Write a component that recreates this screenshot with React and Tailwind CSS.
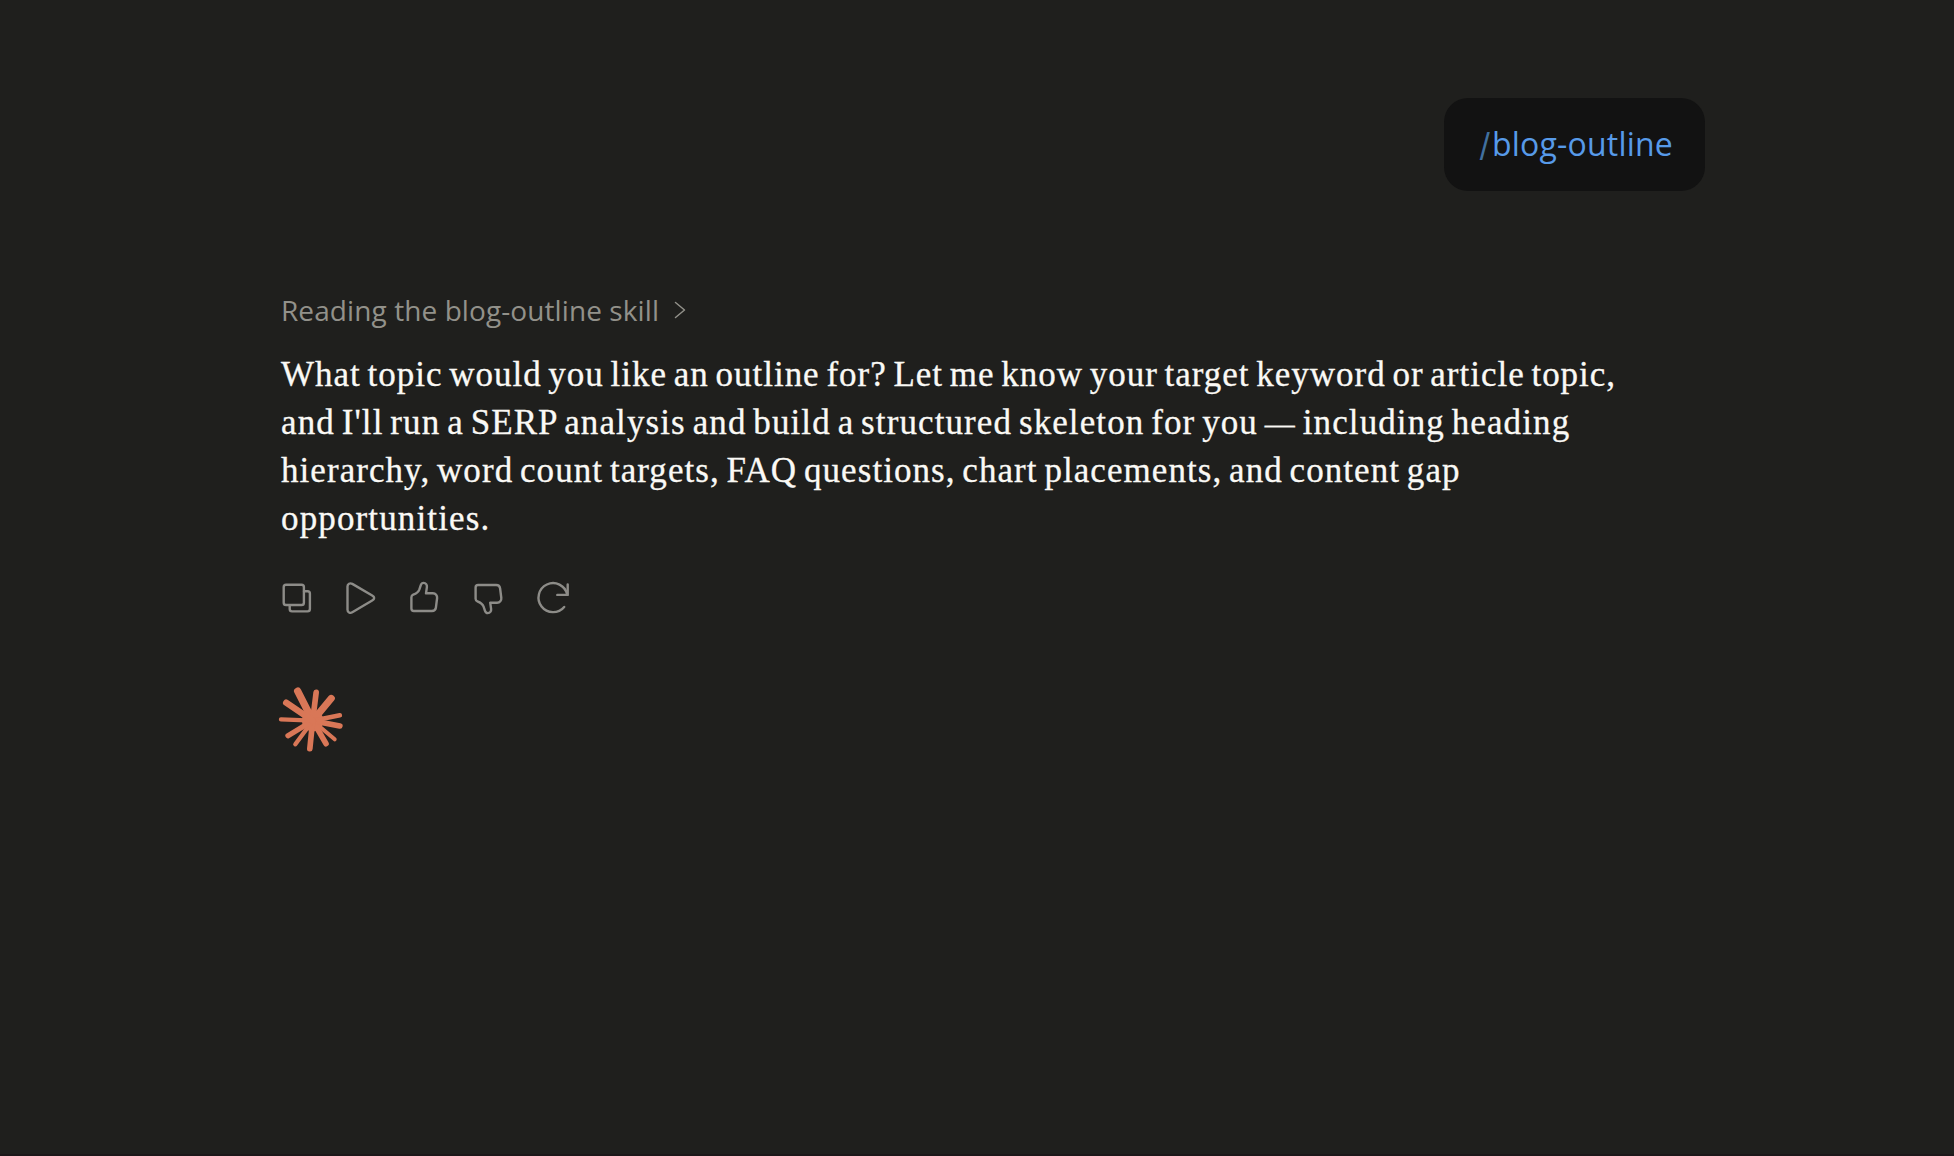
const lines = [
  { text: 'What topic would you like an outline for? Let me know your target keyword or article topic,', cls: 'tracking-[0.99px]' },
  {
    text: (
      <>
        and I'll run a SERP analysis and build a structured skeleton for you <span className="text-[30px] leading-none">—</span> including heading
      </>
    ),
    cls: 'tracking-[1.1px]',
  },
  { text: 'hierarchy, word count targets, FAQ questions, chart placements, and content gap', cls: 'tracking-[1.06px]' },
  { text: 'opportunities.', cls: 'tracking-[1.13px]' },
];

const actions = [
  {
    label: 'Copy',
    paths: [
      'M9 6.8h15.6a2.3 2.3 0 0 1 2.3 2.3v15.6a2.3 2.3 0 0 1-2.3 2.3H9a2.3 2.3 0 0 1-2.3-2.3V9.1A2.3 2.3 0 0 1 9 6.8Z',
      'M27 13.2h3.6a2.3 2.3 0 0 1 2.3 2.3v15.6a2.3 2.3 0 0 1-2.3 2.3H15a2.3 2.3 0 0 1-2.3-2.3v-3.8',
    ],
  },
  {
    label: 'Play',
    paths: ['M6.5 8.5c0-2.6 2.5-3.9 4.8-2.6l19.9 11.6c2.6 1.5 2.6 3.5 0 5L11.3 34.3c-2.3 1.3-4.8 0-4.8-2.6Z'],
  },
  {
    label: 'Good response',
    paths: ['M6.4 19.3a2.8 2.8 0 0 1 1.8-2.6c3.6-1.3 5.2-2.6 6.2-5.3l1.4-4.2c.5-1.5 1.4-2.3 2.8-2.3 2.2 0 3.6 1.9 3.3 4.2l-.9 6.2h6.9c2.7 0 4.5 2.2 4.2 4.9l-1.2 9.4c-.3 2.1-1.8 3.4-3.9 3.4H8.9a2.5 2.5 0 0 1-2.5-2.5Z'],
  },
  {
    label: 'Bad response',
    paths: ['M6.6 20.7a2.8 2.8 0 0 0 1.8 2.6c3.6 1.3 5.2 2.6 6.2 5.3l1.4 4.2c.5 1.5 1.4 2.3 2.8 2.3 2.2 0 3.6-1.9 3.3-4.2l-.9-6.2h6.9c2.7 0 4.5-2.2 4.2-4.9l-1.2-9.4c-.3-2.1-1.8-3.4-3.9-3.4H9.1a2.5 2.5 0 0 0-2.5 2.5Z'],
  },
  {
    label: 'Retry',
    paths: ['M34.7 6.5v10.4H24.3', 'M34.2 16.6A14.5 14.5 0 1 0 31.2 28.9'],
  },
];

const rays = [
  [57, 13.5, 18], [112.5, 17, 13], [158, 35, 17], [183.5, 86, 10], [183.5, 118, 13], [168, 158, 8],
  [142, 171, 13], [93.5, 186, 13], [50, 173, 9], [28, 147, 12], [7, 98, 9], [22.5, 48, 15],
];

export default function App() {
  return (
    <main className="flex min-h-[1156px] w-full flex-col border-b-2 border-[#1c1719] bg-[#1f1f1d] pt-[98px] pl-[281px] pr-[249px] font-['Open_Sans',sans-serif]">
      <div className="flex h-[93px] w-[261px] items-center self-end rounded-3xl bg-[#121212] pl-[35px] text-[32px] leading-[48px] whitespace-nowrap text-[#579ae9]">
        <span className="w-[13px] font-['Inter',sans-serif] text-[#41709f]">/</span>
        <span className="-mt-px tracking-[0.2px]">blog-outline</span>
      </div>

      <button className="mt-[99px] flex h-10 items-center gap-[15px] self-start text-[28px] leading-10 whitespace-nowrap text-[#92918a]">
        <span className="tracking-[0.09px]">Reading the blog-outline skill</span>
        <svg className="-mt-px h-[18px] w-3" viewBox="0 0 12 18" fill="none" stroke="currentColor" strokeWidth="1.5" strokeLinecap="round" strokeLinejoin="round">
          <path d="M1.5 1.5 10.5 9l-9 7.5" />
        </svg>
      </button>

      <div className="mt-[21px] font-['Liberation_Serif',serif] text-[35px] leading-[48px] text-[#faf9f5] [-webkit-text-stroke:0.3px_#faf9f5] [word-spacing:-3px]">
        {lines.map((l, i) => (
          <p key={i} className={'h-12 whitespace-nowrap ' + l.cls}>{l.text}</p>
        ))}
      </div>

      <div className="-ml-1 mt-[35px] flex gap-6 text-[#8d8c88]">
        {actions.map((a) => (
          <button key={a.label} aria-label={a.label} className="size-10">
            <svg className="size-10" viewBox="0 0 40 40" fill="none" stroke="currentColor" strokeWidth="2.4" strokeLinecap="round" strokeLinejoin="round">
              {a.paths.map((d) => <path key={d} d={d} />)}
            </svg>
          </button>
        ))}
      </div>

      <svg className="-ml-[5px] mt-[66px] size-[72px]" viewBox="0 0 216 216" fill="#d97757" stroke="#d97757" strokeLinecap="round">
        <circle cx="110" cy="110" r="32" stroke="none" />
        {rays.map(([x, y, w]) => (
          <line key={x + '-' + y} x1="110" y1="110" x2={x + 8} y2={y + 8} strokeWidth={w + 4} />
        ))}
      </svg>
    </main>
  );
}
